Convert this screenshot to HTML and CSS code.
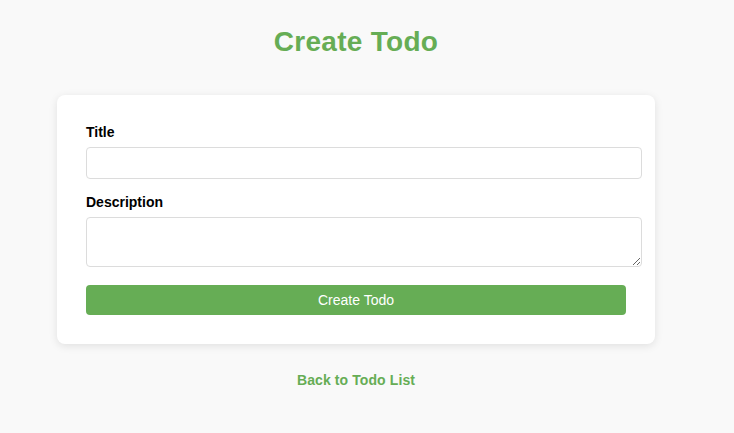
FILE: index.html
```html
<!DOCTYPE html>
<html lang="en">
<head>
<meta charset="utf-8">
<title>Create Todo</title>
<link rel="stylesheet" href="styles.css">
</head>
<body>
<div class="page">
  <h1 class="page-title">Create Todo</h1>
  <form class="card" onsubmit="return false;">
    <div class="field field-title">
      <label class="field-label" for="title">Title</label>
      <input class="field-input" id="title" type="text">
    </div>
    <div class="field field-desc">
      <label class="field-label" for="desc">Description</label>
      <textarea class="field-textarea" id="desc"></textarea>
    </div>
    <button class="submit-btn" type="submit">Create Todo</button>
  </form>
  <a class="back-link" href="#">Back to Todo List</a>
</div>
</body>
</html>
```
FILE: styles.css
```css
html, body {
  margin: 0;
  padding: 0;
  background: #f9f9f9;
  font-family: "Liberation Sans", Arial, sans-serif;
}

.page {
  width: 712px;
  padding-top: 26px;
  display: flex;
  flex-direction: column;
  align-items: center;
}

.page-title {
  margin: 0 0 37px;
  font-size: 28px;
  line-height: 32px;
  font-weight: bold;
  color: #66ad55;
  letter-spacing: 0.3px;
}

.card {
  box-sizing: border-box;
  width: 598px;
  padding: 29px 29px 29px;
  background: #fff;
  border-radius: 8px;
  box-shadow: 0 2px 8px rgba(0, 0, 0, 0.1);
}

.field {
  display: flex;
  flex-direction: column;
}

.field-title {
  margin-bottom: 15px;
}

.field-desc {
  margin-bottom: 18px;
}

.field-label {
  font-size: 14px;
  line-height: 16px;
  font-weight: bold;
  color: #000;
  margin-bottom: 7px;
}

.field-input,
.field-textarea {
  box-sizing: content-box;
  width: 540px;
  padding: 0 7px;
  margin: 0;
  border: 1px solid #dcdcdc;
  border-radius: 4px;
  background: #fff;
  font-family: "Liberation Sans", Arial, sans-serif;
  font-size: 14px;
  outline: none;
}

.field-input {
  height: 30px;
}

.field-textarea {
  height: 48px;
  display: block;
}

.submit-btn {
  display: block;
  width: 540px;
  height: 30px;
  margin: 0;
  padding: 0;
  border: none;
  border-radius: 4px;
  background: #66ad55;
  color: #fff;
  font-family: "Liberation Sans", Arial, sans-serif;
  font-size: 14px;
  cursor: pointer;
}

.back-link {
  margin-top: 28px;
  font-size: 14px;
  line-height: 16px;
  font-weight: bold;
  color: #66ad55;
  text-decoration: none;
  letter-spacing: 0.1px;
}
```
